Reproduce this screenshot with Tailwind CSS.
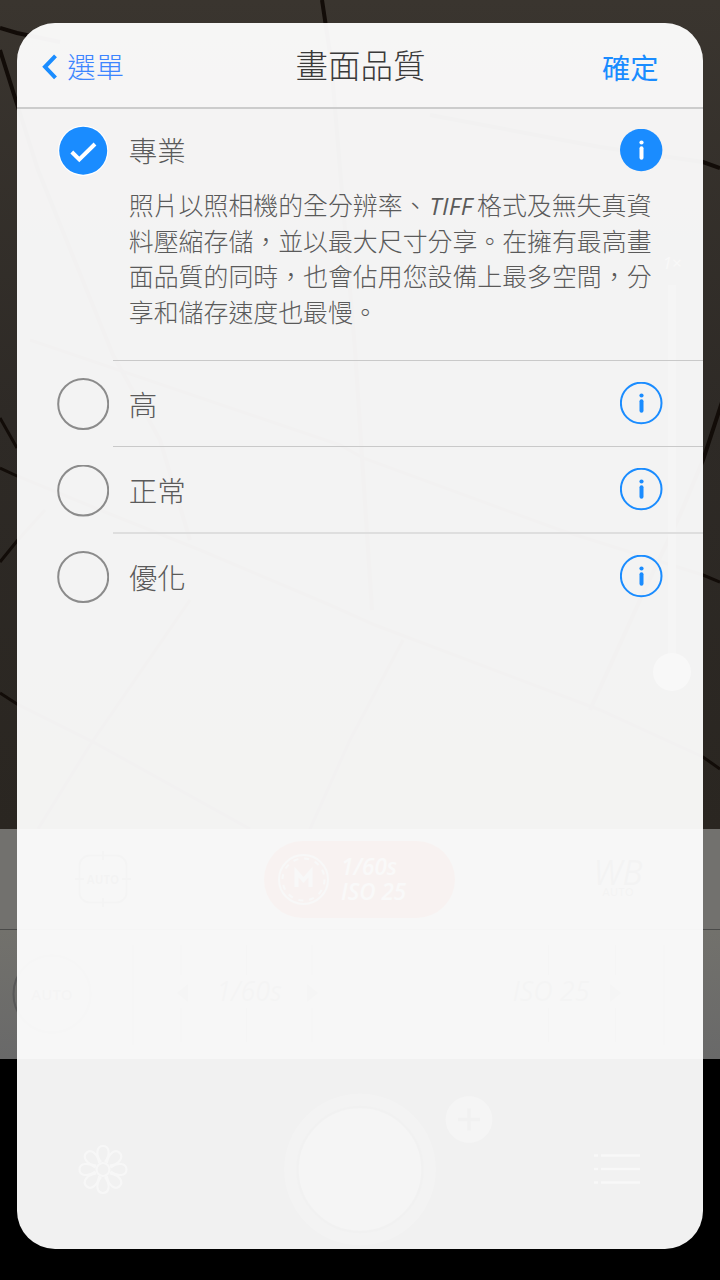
<!DOCTYPE html>
<html lang="zh-TW">
<head>
<meta charset="utf-8">
<title>畫面品質</title>
<script src="https://cdn.jsdelivr.net/npm/@tailwindcss/browser@4"></script>
</head>
<body class="bg-black">
<div class="relative w-[720px] h-[1280px] overflow-hidden bg-black font-['Open_Sans','Noto_Sans_CJK_TC',sans-serif]">

  <!-- Dimmed camera screen -->
  <div class="flex flex-col h-full">
    <div class="relative h-[829px] bg-linear-to-b from-[#3a352f] via-[#2e2a26] to-[#2a2621]">
      <svg class="block w-full h-full" viewBox="0 0 720 829" fill="none" stroke="#120c08" stroke-width="4">
        <path d="M0 28L17 33L60 42M0 50L17 104L38 170L113 355L160 440L190 540M322 0L331 60L355 350L372 610M430 115L600 147L703 162L720 168"/>
        <path stroke-width="3" d="M0 418L17 448M0 468L17 476L100 510L200 550L330 605L375 625L600 710L703 757L720 769M0 562L17 541L45 510M30 340L340 445L363 458L560 530L703 575L720 582M0 693L17 704L95 743L250 829M190 600L90 745L38 829M403 640L350 740L310 829"/>
        <path d="M722 402L703 460L680 515L640 600L590 710"/>
      </svg>
      <div class="absolute left-[653px] top-[250px] w-[38px] flex flex-col items-center">
        <span class="text-[17px] leading-[26px] italic text-[#808080]">1×</span>
        <span class="mt-[9px] w-2 h-[370px] bg-[#4c4c4c]"></span>
        <span class="size-[38px] rounded-full bg-[#808080] -mt-0.5"></span>
      </div>
    </div>

    <div class="h-[101px] flex items-center bg-[#72716e] border-b border-[#4a4a49] text-[#303030]">
      <svg class="w-14 h-14 ml-[75px]" viewBox="0 0 56 56" fill="none" stroke="#404040" stroke-width="2">
        <rect x="4.500" y="4.500" width="47" height="47" rx="10"/>
        <path d="M28 0V9M28 47V56M0 28H9M47 28H56"/>
        <text x="28" y="32.500" text-anchor="middle" font-size="11.500" font-weight="700" fill="#303030" stroke="none">AUTO</text>
      </svg>
      <div class="ml-[133px] w-[191px] h-[77px] rounded-full bg-[#80200a] flex items-center pl-3.5 text-[#909090]">
        <svg class="size-[51px]" viewBox="0 0 51 51" fill="none" stroke="#808080">
          <circle cx="25.500" cy="25.500" r="24.500" stroke-width="2"/>
          <circle cx="25.500" cy="25.500" r="21" stroke-width="2" stroke-dasharray="5 6"/>
          <path d="M18.500 33V18L25.500 26L32.500 18V33" stroke-width="4"/>
        </svg>
        <div class="ml-3 text-[22.500px] leading-[25px] font-semibold italic whitespace-nowrap"><div>1/60s</div><div>ISO 25</div></div>
      </div>
      <div class="ml-[135px] w-[56px] flex flex-col items-center">
        <span class="text-[34px] leading-[26px] font-medium italic">WB</span>
        <span class="text-[11.500px] leading-[14px] font-semibold">AUTO</span>
      </div>
    </div>

    <div class="h-[129px] bg-linear-to-b from-[#72716c] to-[#696969]">
      <svg class="w-full h-full" viewBox="0 0 720 129" fill="none" stroke="#555">
        <circle cx="52" cy="64" r="38.500" stroke="#585858" stroke-width="2"/>
        <g stroke-width="1"><path d="M133 15V115M181 15V45M181 78V112M246.500 15V45M246.500 78V112M312 15V45M312 78V112M548.500 15V45M548.500 78V112M615.500 15V45M615.500 78V112M664 15V115"/></g>
        <g fill="#404040" stroke="none">
          <path fill="#4c4c4c" d="M188 54V72L177 63ZM307 54V72L318 63ZM610 54V72L621 63Z"/>
          <text x="52" y="70" text-anchor="middle" font-size="15" font-weight="600">AUTO</text>
          <text x="249" y="71" text-anchor="middle" font-size="27" font-style="italic">1/60s</text>
          <text x="551" y="71" text-anchor="middle" font-size="27" font-style="italic">ISO 25</text>
        </g>
      </svg>
    </div>

    <div class="h-[221px]">
      <svg class="w-full h-full" viewBox="0 1059 720 221" fill="none">
        <g stroke="#707070" stroke-width="2.200">
          <circle cx="103" cy="1169.500" r="6.500"/>
          <g id="petals">
            <path id="petal" d="M101 1162C95 1154 97 1146 103 1146S111 1154 105 1162"/>
            <use href="#petal" transform="rotate(45 103 1169.500)"/>
            <use href="#petal" transform="rotate(90 103 1169.500)"/>
            <use href="#petal" transform="rotate(135 103 1169.500)"/>
          </g>
          <use href="#petals" transform="rotate(180 103 1169.500)"/>
        </g>
        <circle cx="360" cy="1169.500" r="76" fill="#282828"/>
        <circle cx="360" cy="1169.500" r="62.500" fill="#484848" stroke="#101010" stroke-width="2.500"/>
        <circle cx="469" cy="1119.500" r="23.500" fill="#484848"/>
        <path d="M458 1119.500H480M469 1108.500V1130.500" stroke="#0a0a0a" stroke-width="3.500"/>
        <path d="M594 1155.500H598M601 1155.500H640M594 1169H598M601 1169H640M594 1182.500H598M601 1182.500H640" stroke="#787878" stroke-width="2.500"/>
      </svg>
    </div>
  </div>

  <!-- Translucent settings sheet -->
  <section class="absolute left-[17.33px] top-[23px] w-[685.33px] h-[1226.33px] rounded-[38px] overflow-hidden bg-white/[.944] font-light text-[#5a5a5a]">
    <header class="h-[86px] border-b-2 border-[#cccccc] bg-white/20 flex items-center pl-[24px] pr-[44px]">
      <div class="w-[210px] flex items-center pt-1">
        <svg class="w-[16px] h-[26px]" viewBox="0 0 16 26" fill="none" stroke="#1a8cff" stroke-width="4"><path d="M14.500 1.800L4 12.800L14.500 23.800"/></svg>
        <span class="ml-[10px] text-[28.300px] leading-10 text-[#3d85ff]">選單</span>
      </div>
      <h1 class="flex-1 text-center text-[32.500px] leading-10 text-[#3a3a3a] whitespace-nowrap pt-0.5 pl-[14px]">畫面品質</h1>
      <button class="w-[203px] text-right text-[28.300px] leading-10 font-normal text-[#1a8cff] pt-1.5">確定</button>
    </header>

    <div class="flex pl-[41px]">
      <svg class="mt-[16px] size-[52px] shrink-0" viewBox="0 0 52 52" fill="none"><circle cx="25.200" cy="25.700" r="25.200" fill="#fff"/><circle cx="25.200" cy="25.700" r="24" fill="#1a8cff"/><path d="M13.800 27L21.300 34.500L37 19" stroke="#fff" stroke-width="4"/></svg>
      <div class="ml-[3px] flex-1 h-[252px] border-b border-[#c9c9c9] pl-[15.500px] pr-[40px] pt-[19px]">
        <div class="flex items-center justify-between h-[44px]">
          <span class="text-[28.500px] leading-10 pt-0.5">專業</span>
          <svg class="size-[43px]" viewBox="0 0 43 43"><circle cx="21.200" cy="21" r="21.200" fill="#1a8cff"/><g fill="#fff"><circle cx="21.500" cy="13.500" r="2.100"/><rect x="19.500" y="17.200" width="4" height="13.500" rx="2"/></g></svg>
        </div>
        <p class="mt-[16px] text-[24.900px] leading-[35.600px] whitespace-nowrap">照片以照相機的全分辨率、<i class="inline-block w-[49.500px] pl-0.5 text-[24px] font-normal tracking-[0.4px] leading-none">TIFF</i>格式及無失真資<br>料壓縮存儲，並以最大尺寸分享。在擁有最高畫<br>面品質的同時，也會佔用您設備上最多空間，分<br>享和儲存速度也最慢。</p>
      </div>
    </div>

    <div class="flex items-center pl-[40px] h-[86px]">
      <svg class="size-[52px] shrink-0" viewBox="0 0 52 52"><circle cx="26.200" cy="26" r="25" fill="none" stroke="#8b8b8b" stroke-width="2"/></svg>
      <div class="ml-[4px] flex-1 h-full border-b border-[#c9c9c9] pl-[15.500px] pr-[40px] flex items-center justify-between">
        <span class="text-[28.500px] leading-10 pt-0.5">高</span>
        <svg class="size-[43px]" viewBox="0 0 43 43"><circle cx="21.200" cy="21" r="20.300" fill="none" stroke="#1a8cff" stroke-width="2"/><g fill="#1a8cff"><circle cx="21.500" cy="13.500" r="2.100"/><rect x="19.500" y="17.200" width="4" height="13.500" rx="2"/></g></svg>
      </div>
    </div>
    <div class="flex items-center pl-[40px] h-[87px]">
      <svg class="size-[52px] shrink-0" viewBox="0 0 52 52"><circle cx="26.200" cy="25.500" r="25" fill="none" stroke="#8b8b8b" stroke-width="2"/></svg>
      <div class="ml-[4px] flex-1 h-full border-b-2 border-[#dedede] pl-[15.500px] pr-[40px] flex items-center justify-between">
        <span class="text-[28.500px] leading-10 pt-0.5">正常</span>
        <svg class="size-[43px]" viewBox="0 0 43 43"><circle cx="21.200" cy="21" r="20.300" fill="none" stroke="#1a8cff" stroke-width="2"/><g fill="#1a8cff"><circle cx="21.500" cy="13.500" r="2.100"/><rect x="19.500" y="17.200" width="4" height="13.500" rx="2"/></g></svg>
      </div>
    </div>
    <div class="flex items-center pl-[40px] h-[85px]">
      <svg class="size-[52px] shrink-0" viewBox="0 0 52 52"><circle cx="26.200" cy="26" r="25" fill="none" stroke="#8b8b8b" stroke-width="2"/></svg>
      <div class="ml-[4px] flex-1 h-full pl-[15.500px] pr-[40px] flex items-center justify-between">
        <span class="text-[28.500px] leading-10 pt-0.5">優化</span>
        <svg class="size-[43px]" viewBox="0 0 43 43"><circle cx="21.200" cy="21" r="20.300" fill="none" stroke="#1a8cff" stroke-width="2"/><g fill="#1a8cff"><circle cx="21.500" cy="13.500" r="2.100"/><rect x="19.500" y="17.200" width="4" height="13.500" rx="2"/></g></svg>
      </div>
    </div>
  </section>
</div>
</body>
</html>
